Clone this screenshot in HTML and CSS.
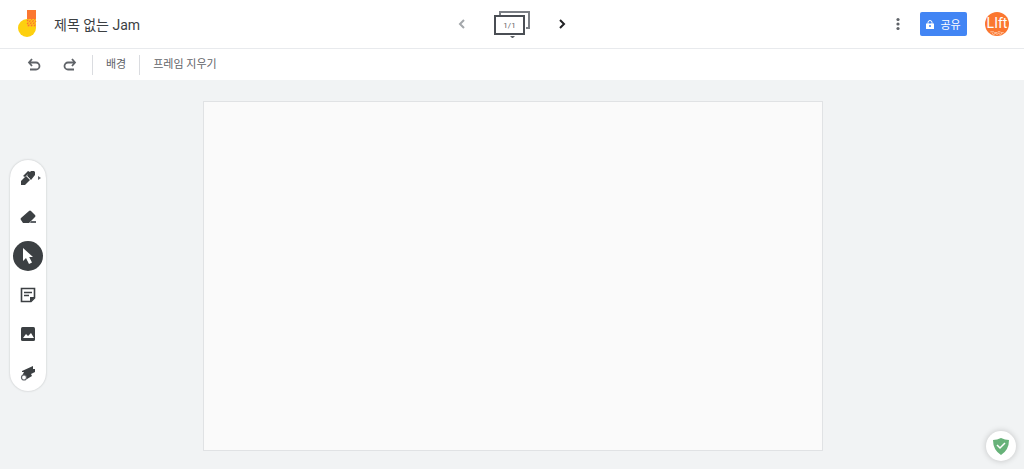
FILE: index.html
```html
<!DOCTYPE html>
<html lang="ko">
<head>
  <meta charset="UTF-8">
  <meta name="viewport" content="width=device-width, initial-scale=1">
  <title>제목 없는 Jam</title>
  <link rel="stylesheet" href="styles.css">
</head>
<body>
  <header class="header">
    <div class="header-left">
      <a href="#" class="logo" aria-label="홈">
        <svg width="20" height="30" viewBox="0 0 20 30">
          <circle cx="9" cy="19" r="9" fill="#fdd00f"/>
          <path d="M9 10h9v9H9z" fill="#fdd00f"/>
          <path d="M9 1h9v9H9z" fill="#fb7730"/>
          <path d="M9 10h9v8H9z" fill="#ffc21c"/>
          <path d="M9 12l2-2M9 15l5-5M10 17l7-7M13 17l5-5M16 17l2-2" stroke="#fb7730" stroke-width="1.200" stroke-dasharray="2 1"/>
        </svg>
      </a>
      <h1 class="title">제목 없는 Jam</h1>
    </div>

    <nav class="frames">
      <button class="icon-btn prev" aria-label="이전 프레임">
        <svg width="16" height="16" viewBox="0 0 16 16"><path d="M10 4L6 8l4 4" fill="none" stroke="currentColor" stroke-width="2"/></svg>
      </button>
      <button class="frame-btn" aria-label="프레임 표시줄 펼치기">
        <svg width="36" height="28" viewBox="0 0 36 28">
          <path d="M6 5V2h29v16h-3" fill="none" stroke="#7b7f85" stroke-width="2"/>
          <rect x="1" y="6" width="29" height="18" fill="#fff" stroke="#4a4e54" stroke-width="2"/>
          <path d="M16 26h5l-2 2h-1z" fill="#5f6368"/>
        </svg>
        <span class="frame-count">1/1</span>
      </button>
      <button class="icon-btn next" aria-label="다음 프레임">
        <svg width="16" height="16" viewBox="0 0 16 16"><path d="M6 4l4 4-4 4" fill="none" stroke="currentColor" stroke-width="2"/></svg>
      </button>
    </nav>

    <div class="header-right">
      <button class="icon-btn" aria-label="추가 작업">
        <svg width="16" height="16" viewBox="0 0 16 16" fill="#5f6368"><circle cx="8" cy="3.500" r="1.600"/><circle cx="8" cy="8" r="1.600"/><circle cx="8" cy="12.500" r="1.600"/></svg>
      </button>
      <button class="share-btn">
        <svg width="8" height="9" viewBox="0 0 8 9">
          <path d="M2 4V2.500a2 2 0 0 1 4 0V4" fill="none" stroke="#fff"/>
          <path d="M0 3.500h8V9H0z" fill="#fff"/>
          <circle cx="4" cy="6" r="1" fill="#4285f4"/>
        </svg>
        공유
      </button>
      <button class="avatar" aria-label="계정">
        <span class="avatar-text">LIft</span>
        <svg class="avatar-wave" width="18" height="6" viewBox="0 0 18 6"><path d="M1 1h4l1 1h3l1-1h3l1 1h3M3 3l2 1 2-1 2 1 2-1 2 1 2-1" fill="none" stroke="#ffd9bf"/></svg>
      </button>
    </div>
  </header>

  <div class="toolbar">
    <button class="icon-btn undo" aria-label="실행취소">
      <svg width="14" height="14" viewBox="0 0 14 14"><path d="M5 1L2 4.500 5 8M2 4.500h7a3.500 3.500 0 0 1 0 7H3" fill="none" stroke="currentColor" stroke-width="1.800"/></svg>
    </button>
    <button class="icon-btn redo" aria-label="재실행">
      <svg width="14" height="14" viewBox="0 0 14 14"><path d="M9 1l3 3.500L9 8M12 4.500H5a3.500 3.500 0 0 0 0 7h6" fill="none" stroke="currentColor" stroke-width="1.800"/></svg>
    </button>
    <button class="text-btn">배경</button>
    <button class="text-btn">프레임 지우기</button>
  </div>

  <main class="workspace">
    <div class="tools">
      <button class="tool" aria-label="펜">
        <svg width="16" height="16" viewBox="0 0 16 16" fill="#3c4043">
          <path d="M1 15v-4l5-5 4 4-5 5z"/>
          <path d="M3 6l5-5 2 1 1-1h3l1 1v3l-4 5-4-4 1-2-3 3z"/>
          <path d="M7 6l3 3" stroke="#fff" stroke-width=".6"/>
        </svg>
        <svg class="more" width="3" height="4" viewBox="0 0 3 4"><path d="M0 0l3 2-3 2z" fill="#5f6368"/></svg>
      </button>
      <button class="tool" aria-label="지우개">
        <svg width="16" height="16" viewBox="0 0 16 16"><path d="M1 9l8-7q1-1 2 0l4 4q1 1 0 2l-6 6H3l-2-3q-1-1 0-2z" fill="#3c4043"/><path d="M11 12h5v2h-6z" fill="#5f6368"/></svg>
      </button>
      <button class="tool active" aria-label="선택">
        <svg width="16" height="16" viewBox="0 0 16 16"><path d="M3 0v13l3-3 3 6 3-1.500L9.200 9H13z" fill="#fff"/></svg>
      </button>
      <button class="tool" aria-label="스티커 메모">
        <svg width="16" height="16" viewBox="0 0 16 16"><path d="M1.500 1.500h13v9.500l-3.500 3.500H1.500zM4 5.500h8M4 8.500h5" fill="none" stroke="#3c4043" stroke-width="1.600"/><path d="M10 15v-5h5z" fill="#3c4043"/></svg>
      </button>
      <button class="tool" aria-label="이미지 추가">
        <svg width="16" height="16" viewBox="0 0 16 16"><rect x="1" y="1" width="14" height="14" rx="1.500" fill="#3c4043"/><path d="M3 12l3-4 2 2 3-3 3 5z" fill="#fff"/></svg>
      </button>
      <button class="tool" aria-label="레이저">
        <svg width="16" height="16" viewBox="0 0 16 16"><path d="M2 6l11-5v3h2v3l-4 2 1 2-5 3-5-3 2-4H2z" fill="#3c4043"/><circle cx="4" cy="12.500" r="2.500" fill="#fff" stroke="#5f6368" stroke-width="1.200"/></svg>
      </button>
    </div>
    <div class="canvas"></div>
    <button class="shield" aria-label="보호 상태">
      <svg width="16" height="17" viewBox="0 0 16 17"><path d="M8 0q4 2 8 2 0 10-8 15Q0 12 0 2q4 0 8-2z" fill="#67b279"/><path d="M4 7l3 3 5-5" fill="none" stroke="#fff" stroke-width="1.500"/></svg>
    </button>
  </main>
</body>
</html>
```
FILE: styles.css
```css
* {
  box-sizing: border-box;
}

body {
  margin: 0;
  height: 100vh;
  display: flex;
  flex-direction: column;
  font-family: Roboto, "Noto Sans CJK KR", sans-serif;
  color: #3c4043;
  background: #f1f3f4;
}

button {
  font: inherit;
  color: inherit;
  border: 0;
  padding: 0;
  background: none;
  cursor: pointer;
}

svg {
  display: block;
}

/* header */
.header {
  display: grid;
  grid-template-columns: 1fr auto 1fr;
  align-items: center;
  height: 49px;
  padding: 0 15px;
  background: #fff;
  border-bottom: 1px solid #e8eaed;
}

.header-left,
.header-right,
.frames {
  display: flex;
  align-items: center;
}

.logo {
  margin: 0 16px 0 3px;
}

.title {
  margin: 0;
  font-size: 14px;
  font-weight: 400;
}

.icon-btn {
  display: flex;
  align-items: center;
  justify-content: center;
  width: 24px;
  height: 24px;
}

.frames {
  gap: 20px;
}

.prev {
  color: #a3a7ab;
}

.next {
  color: #202124;
}

.frame-btn {
  position: relative;
}

.frame-count {
  position: absolute;
  top: 7px;
  left: 0;
  width: 31px;
  font-size: 8px;
  line-height: 18px;
  color: #5f6368;
}

.header-right {
  justify-content: flex-end;
}

.share-btn {
  display: flex;
  align-items: center;
  justify-content: center;
  gap: 6px;
  width: 47px;
  height: 24px;
  margin: 0 18px 0 10px;
  border-radius: 2px;
  background: #4285f4;
  color: #fff;
  font-size: 11px;
}

.avatar {
  display: flex;
  flex-direction: column;
  align-items: center;
  width: 24px;
  height: 24px;
  padding-top: 3px;
  border-radius: 50%;
  background: #fb7730;
  color: #fff;
  overflow: hidden;
}

.avatar-text {
  font-size: 14px;
  line-height: 16px;
}

/* toolbar */
.toolbar {
  display: flex;
  align-items: center;
  height: 31px;
  padding-left: 22px;
  background: #fff;
  color: #5f6368;
}

.redo {
  margin: 0 10px 0 12px;
}

.text-btn {
  height: 20px;
  padding: 0 13px;
  border-left: 1px solid #dadce0;
  font-size: 11px;
  line-height: 20px;
}

/* workspace */
.workspace {
  position: relative;
  flex: 1;
  min-height: 0;
  display: grid;
  grid-template-columns: 1fr auto 1fr;
  grid-template-rows: minmax(0, 1fr);
  padding: 21px 9px 18px 10px;
}

.tools {
  align-self: center;
  justify-self: start;
  display: flex;
  flex-direction: column;
  gap: 9px;
  margin-bottom: 2px;
  padding: 3px;
  border-radius: 18px;
  background: #fff;
  box-shadow: 0 0 2px rgba(60, 64, 67, 0.3);
}

.tool {
  position: relative;
  display: flex;
  align-items: center;
  justify-content: center;
  width: 30px;
  height: 30px;
  border-radius: 50%;
}

.tool.active {
  background: #3c4043;
}

.more {
  position: absolute;
  top: 13px;
  right: 2px;
}

.canvas {
  height: 100%;
  aspect-ratio: 620 / 350;
  background: #fafafa;
  border: 1px solid #e0e2e4;
}

.shield {
  position: absolute;
  right: 8px;
  bottom: 8px;
  display: flex;
  align-items: center;
  justify-content: center;
  width: 30px;
  height: 30px;
  border-radius: 50%;
  background: #fff;
  box-shadow: 0 0 6px rgba(0, 0, 0, 0.2);
}
```
